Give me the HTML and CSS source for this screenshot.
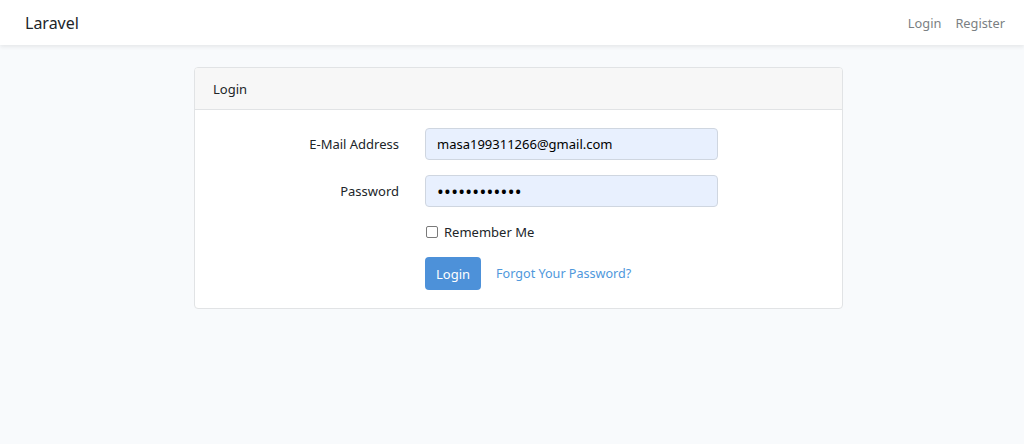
FILE: index.html
```html
<!DOCTYPE html>
<html>
<head>
<meta charset="utf-8">
<link rel="stylesheet" href="styles.css">
</head>
<body>
<nav class="navbar">
  <span class="brand">Laravel</span>
  <div class="nav-links">
    <a class="nav-link">Login</a>
    <a class="nav-link">Register</a>
  </div>
</nav>
<main class="main">
  <div class="card">
    <div class="card-header">Login</div>
    <div class="card-body">
      <div class="row">
        <label class="label">E-Mail Address</label>
        <div class="input">masa199311266@gmail.com</div>
      </div>
      <div class="row">
        <label class="label">Password</label>
        <div class="input pw">••••••••••••</div>
      </div>
      <div class="row check-row">
        <span class="label"></span>
        <div class="check"><span class="box"></span><span>Remember Me</span></div>
      </div>
      <div class="row btn-row">
        <span class="label"></span>
        <div class="actions"><span class="btn">Login</span><a class="link">Forgot Your Password?</a></div>
      </div>
    </div>
  </div>
</main>
</body>
</html>
```
FILE: styles.css
```css
* { box-sizing: border-box; }
html, body { margin: 0; height: 100%; }
body {
  background: #f8fafc;
  font-family: "Noto Sans", "Open Sans", sans-serif;
  font-size: 13px;
  color: #212529;
}
.navbar {
  height: 45px;
  background: #fff;
  box-shadow: 0 2px 4px rgba(0,0,0,.075);
  display: flex;
  align-items: center;
  justify-content: space-between;
  padding: 0 19px 0 25px;
}
.brand { font-size: 16px; color: #212529; }
.nav-links { display: flex; gap: 14px; }
.nav-link { color: #7b7f83; font-size: 12.8px; }
.main { padding: 22px 0 0 194px; }
.card {
  width: 649px;
  background: #fff;
  border: 1px solid #e1e3e5;
  border-radius: 4px;
  overflow: hidden;
}
.card-header {
  height: 42px;
  background: #f7f7f7;
  border-bottom: 1px solid #e1e3e5;
  display: flex;
  align-items: center;
  padding: 0 18px;
}
.card-body { padding: 18px 0 18px; }
.row { display: flex; align-items: center; margin-bottom: 15px; }
.label { width: 204px; text-align: right; flex-shrink: 0; }
.input {
  margin-left: 26px;
  width: 293px;
  height: 32px;
  background: #e8f0fe;
  border: 1px solid #cfd6e0;
  border-radius: 4px;
  display: flex;
  align-items: center;
  padding: 0 11px;
  color: #000;
}
.pw { letter-spacing: 0.3px; font-size: 18px; }
.check-row { margin-top: 16px; margin-bottom: 16px; height: 18px; }
.check { margin-left: 27px; display: flex; align-items: center; gap: 6px; }
.box {
  width: 12px; height: 12px;
  border: 1px solid #7a7a7a;
  border-radius: 2px;
  background: #fff;
}
.btn-row { margin-bottom: 0; }
.actions { margin-left: 26px; display: flex; align-items: center; gap: 15px; }
.btn {
  background: #4d91d9;
  color: #fff;
  border-radius: 4px;
  height: 33px;
  padding: 0 11px;
  display: flex;
  align-items: center;
}
.link { color: #4f98dc; font-size: 12.6px; }
```
